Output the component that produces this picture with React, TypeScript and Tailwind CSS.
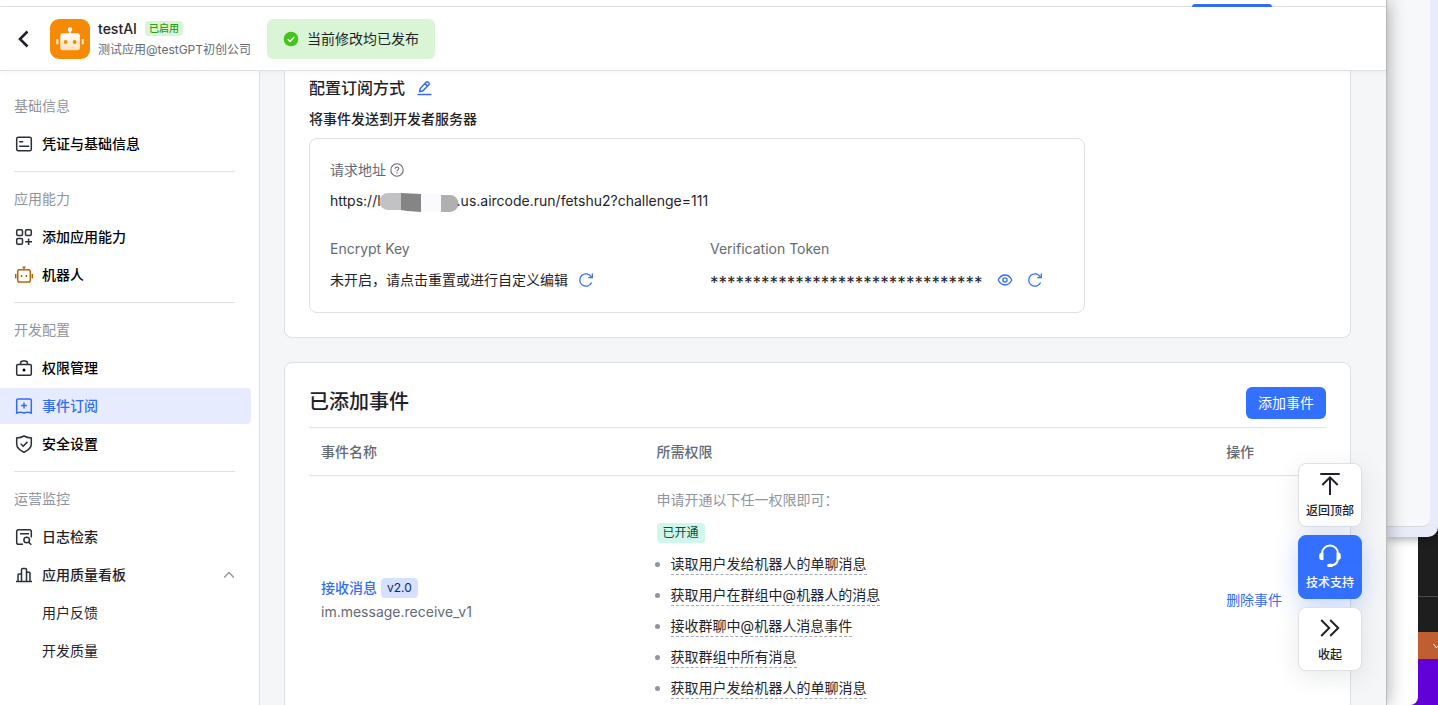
import { type ReactNode } from "react";

type NavItem = {
  label: string;
  icon?: ReactNode;
  active?: boolean;
  soft?: boolean;
  open?: boolean;
};

const NAV: { title: string; items: NavItem[] }[] = [
  {
    title: "基础信息",
    items: [{ label: "凭证与基础信息", icon: <CredentialIcon /> }],
  },
  {
    title: "应用能力",
    items: [
      { label: "添加应用能力", icon: <AddAppIcon /> },
      { label: "机器人", icon: <RobotIcon /> },
    ],
  },
  {
    title: "开发配置",
    items: [
      { label: "权限管理", icon: <LockIcon /> },
      { label: "事件订阅", icon: <EventIcon />, active: true },
      { label: "安全设置", icon: <ShieldIcon /> },
    ],
  },
  {
    title: "运营监控",
    items: [
      { label: "日志检索", icon: <LogIcon />, soft: true },
      { label: "应用质量看板", icon: <ChartIcon />, soft: true, open: true },
      { label: "用户反馈" },
      { label: "开发质量" },
    ],
  },
];

const PERMISSIONS = [
  "读取用户发给机器人的单聊消息",
  "获取用户在群组中@机器人的消息",
  "接收群聊中@机器人消息事件",
  "获取群组中所有消息",
  "获取用户发给机器人的单聊消息",
];

export default function App() {
  return (
    <div className="flex h-screen overflow-hidden bg-[#1e1e1e] font-['Inter','Noto_Sans_CJK_SC',sans-serif] text-sm text-[#1f2329]">
      <div className="relative z-10 flex min-w-0 flex-1 flex-col border-r border-[#b9bbbd] bg-white shadow-[0_0_18px_rgba(0,0,0,0.35)]">
        {/* Bottom edge of the site tabs */}
        <div className="flex h-[7px] shrink-0 items-end justify-end border-b border-[#dee0e3] pr-[114px]">
          <span className="-mb-px h-[3px] w-20 rounded-t-sm bg-[#336df4]" />
        </div>
        <Header />
        <div className="flex min-h-0 flex-1">
          <Sidebar />
          <main className="min-w-0 flex-1 overflow-hidden bg-[#f5f6f7] pr-[35px] pl-6">
            <SubscriptionCard />
            <EventsCard />
          </main>
        </div>
        <FloatingActions />
      </div>
      <Backdrop />
    </div>
  );
}

function Header() {
  return (
    <header className="relative z-10 flex h-16 shrink-0 items-center border-b border-[#dee0e3] bg-white pl-3.5 shadow-[0_2px_6px_rgba(31,35,41,0.04)]">
      <button aria-label="返回" className="mr-4 flex h-5 w-5 items-center justify-center">
        <svg width="20" height="20" viewBox="0 0 20 20" fill="none" stroke="#1f2329" strokeWidth="2.6">
          <path d="M13.5 2.5 6 10l7.5 7.5" />
        </svg>
      </button>
      <AvatarIcon />
      <div className="ml-2 pt-px">
        <div className="flex items-center gap-2">
          <h1 className="leading-5 font-medium">testAI</h1>
          <span className="rounded bg-[#d9f5d6] px-1 text-[10px] leading-[15px] font-medium text-[#2ea121]">
            已启用
          </span>
        </div>
        <p className="mt-px text-xs leading-5 text-[#646a73]">测试应用@testGPT初创公司</p>
      </div>
      <div className="ml-4 flex h-10 items-center gap-2 rounded-md bg-[#d9f5d6] px-4">
        <svg width="16" height="16" viewBox="0 0 16 16" fill="none">
          <circle cx="8" cy="8" r="7.3" fill="#43c51b" />
          <path d="m4.8 8.2 2.3 2.2 4.1-4.3" stroke="#fff" strokeWidth="1.5" />
        </svg>
        <span>当前修改均已发布</span>
      </div>
    </header>
  );
}

function Sidebar() {
  return (
    <nav className="w-[260px] shrink-0 overflow-hidden border-r border-[#dee0e3] bg-white pt-[21px]">
      {NAV.map((section, i) => (
        <section key={section.title}>
          {i > 0 && <hr className="mt-[9px] mr-6 mb-[13px] ml-3.5 border-[#dee0e3]" />}
          <h2 className="mb-1.5 ml-3.5 flex h-7 items-center text-[#8f959e]">{section.title}</h2>
          <ul className="mr-2 flex flex-col gap-0.5">
            {section.items.map((item) => (
              <li key={item.label}>
                <SidebarLink item={item} />
              </li>
            ))}
          </ul>
        </section>
      ))}
    </nav>
  );
}

function SidebarLink({ item }: { item: NavItem }) {
  const tone = item.active
    ? "bg-[#e6ebfe] font-medium text-[#336df4]"
    : !item.icon
      ? "text-[#1f2329]"
      : item.soft
        ? "font-medium text-[#1f2329]"
        : "font-medium text-black";

  return (
    <a href="#" className={`flex h-9 items-center gap-2 rounded-r pr-4 pl-3.5 ${tone}`}>
      <span className="h-5 w-5 shrink-0">{item.icon}</span>
      <span className="flex-1">{item.label}</span>
      {item.open && (
        <svg width="12" height="12" viewBox="0 0 12 12" fill="none" stroke="#8f959e" strokeWidth="1.3">
          <path d="m1.2 8.5 4.8-5 4.8 5" />
        </svg>
      )}
    </a>
  );
}

function SubscriptionCard() {
  return (
    <section className="rounded-b-lg border border-t-0 border-[#dee0e3] bg-white px-6 pt-[5px] pb-6">
      <div className="flex items-center gap-3">
        <h2 className="text-base font-medium">配置订阅方式</h2>
        <button aria-label="编辑">
          <svg width="16" height="16" viewBox="0 0 16 16" fill="none" stroke="#336df4" strokeWidth="1.5">
            <path d="M2.7 11.6 3.2 8.5 9.3 2.1c.5-.5 1.2-.5 1.7 0l.9.9c.5.5.5 1.2 0 1.7L5.7 11l-3 .6ZM7.9 3.5l2.6 2.6" />
            <path d="M.5 14.5h14" />
          </svg>
        </button>
      </div>
      <h3 className="mt-2 leading-[22px] font-medium">将事件发送到开发者服务器</h3>
      <div className="mt-2 max-w-[776px] rounded-lg border border-[#dee0e3] p-5">
        <div className="flex items-center gap-1 leading-[22px] text-[#646a73]">
          请求地址
          <svg width="14" height="14" viewBox="0 0 14 14" fill="none" stroke="currentColor" strokeWidth="1.1">
            <circle cx="7" cy="7" r="6.2" />
            <path d="M5.2 5.7c0-1 .8-1.7 1.8-1.7s1.8.7 1.8 1.6c0 1.2-1.8 1.3-1.8 2.6" />
            <path d="M7 9.2v1.2" />
          </svg>
        </div>
        <p className="mt-2 flex items-center leading-6">
          https://l
          <svg className="-mx-0.5" width="80" height="22" viewBox="0 0 80 22">
            <path d="M9 3h13v17H9A8.5 8.5 0 0 1 9 3Z" fill="#c2c2c4" />
            <path d="M22 3l20 1v18l-14-1-6-1Z" fill="#858585" />
            <path d="M42 4h20v18H42Z" fill="#fafafc" />
            <path d="M62 5h9a8.5 8.5 0 0 1 0 17h-9Z" fill="#b0b0b0" />
          </svg>
          .us.aircode.run/fetshu2?challenge=111
        </p>
        <div className="mt-[25px] grid grid-cols-[380px_1fr] gap-y-2">
          <span className="leading-[22px] text-[#646a73]">Encrypt Key</span>
          <span className="leading-[22px] text-[#646a73]">Verification Token</span>
          <div className="flex items-center gap-2.5 leading-6">
            未开启，请点击重置或进行自定义编辑
            <RefreshButton />
          </div>
          <div className="flex h-6 items-center gap-3.5">
            <span className="pt-1.5 text-[17px] leading-6">********************************</span>
            <button aria-label="查看">
              <svg width="16" height="16" viewBox="0 0 16 16" fill="none" stroke="#336df4" strokeWidth="1.3">
                <path d="M1.2 8C2.7 5 5 3 8 3s5.3 2 6.8 5c-1.5 3-3.8 5-6.8 5S2.7 11 1.2 8Z" />
                <circle cx="8" cy="8" r="2.1" />
              </svg>
            </button>
            <RefreshButton />
          </div>
        </div>
      </div>
    </section>
  );
}

function RefreshButton() {
  return (
    <button aria-label="重置">
      <svg width="16" height="16" viewBox="0 0 16 16" fill="none" stroke="#336df4" strokeWidth="1.3">
        <path d="M13.6 10.6A6.2 6.2 0 1 1 13.4 5" />
        <path d="M14.3 1.6v4h-4" />
      </svg>
    </button>
  );
}

function EventsCard() {
  return (
    <section className="mt-6 rounded-t-lg border border-[#dee0e3] bg-white px-6 pt-6">
      <div className="flex items-start justify-between pb-2">
        <h2 className="text-xl leading-[30px] font-medium">已添加事件</h2>
        <button className="h-8 rounded-md bg-[#3370ff] px-3 text-white">添加事件</button>
      </div>
      <table className="w-full table-fixed border-t border-[#dee0e3] text-left">
        <thead>
          <tr className="h-12 border-b border-[#dee0e3] text-[#646a73]">
            <th className="w-[33%] px-3 font-medium">事件名称</th>
            <th className="w-[56%] px-3 font-medium">所需权限</th>
            <th className="w-[11%] px-3 font-medium">操作</th>
          </tr>
        </thead>
        <tbody>
          <tr>
            <td className="px-3 align-middle">
              <div className="flex items-center gap-1">
                <a href="#" className="font-medium text-[#336df4]">
                  接收消息
                </a>
                <span className="rounded bg-[#d6e0ff] px-1.5 text-xs leading-5 text-[#0c296e]">v2.0</span>
              </div>
              <p className="mt-1 text-[#646a73]">im.message.receive_v1</p>
            </td>
            <td className="px-3 pt-[13px] pb-5">
              <p className="leading-[22px] text-[#8f959e]">申请开通以下任一权限即可：</p>
              <span className="mt-3 inline-block rounded bg-[#cff7ec] px-1.5 text-xs leading-5 text-[#044f41]">
                已开通
              </span>
              <ul className="mt-1.5">
                {PERMISSIONS.map((p, i) => (
                  <li key={i} className="flex h-[31px] items-center gap-[11px]">
                    <span className="-ml-0.5 h-[5px] w-[5px] rounded-full bg-[#8f959e]" />
                    <span className="border-b border-dashed border-[#a6abb2] leading-5">{p}</span>
                  </li>
                ))}
              </ul>
            </td>
            <td className="px-3 align-middle">
              <button className="text-[#336df4]">删除事件</button>
            </td>
          </tr>
        </tbody>
      </table>
    </section>
  );
}

function FloatingActions() {
  const light =
    "border-[#dee0e3] bg-white font-medium text-[#1f2329] shadow-[0_6px_24px_rgba(31,35,41,0.10)]";
  const blue =
    "border-[#3370ff] bg-[#3370ff] font-medium text-white shadow-[0_6px_24px_rgba(51,112,255,0.30)]";

  return (
    <div className="absolute right-6 bottom-[34px] z-20 flex flex-col gap-2">
      <FloatButton label="返回顶部" style={light}>
        <path d="M2.3 2h19.4M12 23V5.5M4.3 13 12 5.3l7.7 7.7" />
      </FloatButton>
      <FloatButton label="技术支持" style={blue}>
        <path d="M4 9.5a8 8 0 0 1 16 0M20 14c0 4-2 6.7-6 7.3" />
        <path
          d="M5.5 8.5V16H4a2.8 2.8 0 0 1-2.8-2.8v-2A2.8 2.8 0 0 1 4 8.5ZM18.5 8.5V16H20a2.8 2.8 0 0 0 2.8-2.8v-2A2.8 2.8 0 0 0 20 8.5Z"
          fill="currentColor"
          stroke="none"
        />
        <rect x="9.2" y="19.8" width="6" height="3.2" rx="1.6" fill="currentColor" stroke="none" />
      </FloatButton>
      <FloatButton label="收起" style={light}>
        <path d="m3.2 4 8 8-8 8M12.2 4l8 8-8 8" />
      </FloatButton>
    </div>
  );
}

function FloatButton({
  label,
  style,
  children,
}: {
  label: string;
  style: string;
  children: ReactNode;
}) {
  return (
    <button className={`flex h-16 w-16 flex-col items-center gap-[7px] rounded-lg border pt-2 text-xs ${style}`}>
      <svg width="24" height="24" viewBox="0 0 24 24" fill="none" stroke="currentColor" strokeWidth="2" className="shrink-0">
        {children}
      </svg>
      {label}
    </button>
  );
}

/* Other windows and desktop showing at the right of the browser */
function Backdrop() {
  return (
    <div className="flex w-[51px] shrink-0 flex-col">
      <div className="z-[1] flex-1 rounded-br-[10px] bg-[#e8ecf8] pr-2 pb-2.5 shadow-[0_2px_10px_rgba(0,0,0,0.35)]">
        <div className="h-full rounded-br-lg border-b border-[#d3d8e0] bg-[#f7f8fa]" />
      </div>
      <div className="-mt-2.5 flex h-[178px] bg-[#6200d8]">
        <div className="w-[31px] shrink-0 rounded-br-lg bg-white" />
        <div className="flex flex-1 flex-col">
          <div className="h-[105px] bg-[#1e1e1e] pt-[69px]">
            <div className="border-b border-[#4a4a4a]" />
          </div>
          <div className="flex h-[27px] items-center justify-end bg-[#bf5f31]">
            <svg width="5" height="8" viewBox="0 0 5 8" fill="none" stroke="#fff">
              <path d="m.5 2 3 4L5 4" />
            </svg>
          </div>
        </div>
      </div>
    </div>
  );
}

function AvatarIcon() {
  return (
    <svg width="40" height="40" viewBox="0 0 40 40" className="shrink-0">
      <defs>
        <linearGradient id="head" x1="0" y1="0" x2="0" y2="1">
          <stop offset="0" stopColor="#fff" />
          <stop offset="1" stopColor="#ffe0b8" />
        </linearGradient>
      </defs>
      <rect width="40" height="40" rx="9" fill="#f78a05" />
      <circle cx="20" cy="10.5" r="2.2" fill="#fff" />
      <path d="M19.3 12h1.4v3h-1.4Z" fill="#fff" />
      <rect x="10.3" y="14.3" width="19.6" height="17" rx="2.5" fill="url(#head)" />
      <rect x="6.2" y="20" width="2.2" height="5.6" rx="1.1" fill="#ffe8cc" />
      <rect x="31.7" y="20" width="2.2" height="5.6" rx="1.1" fill="#ffe8cc" />
      <circle cx="15.7" cy="23" r="1.9" fill="#f78a05" />
      <circle cx="24.6" cy="23" r="1.9" fill="#f78a05" />
    </svg>
  );
}

function NavIcon({ color = "#2b2f36", children }: { color?: string; children: ReactNode }) {
  return (
    <svg width="20" height="20" viewBox="0 0 20 20" fill="none" stroke={color} strokeWidth="1.5">
      {children}
    </svg>
  );
}

function CredentialIcon() {
  return (
    <NavIcon>
      <rect x="2.7" y="3.2" width="14.6" height="13.6" rx="1.5" />
      <path d="M5.2 7.7h4M5.2 12.3h10" />
    </NavIcon>
  );
}

function AddAppIcon() {
  return (
    <NavIcon>
      <rect x="2.7" y="2.7" width="5.8" height="5.8" rx="1.2" />
      <rect x="11.5" y="2.7" width="5.8" height="5.8" rx="1.2" />
      <rect x="2.7" y="11.5" width="5.8" height="5.8" rx="1.2" />
      <path d="M14.6 11.5V18M11.2 14.7H18" />
    </NavIcon>
  );
}

function RobotIcon() {
  return (
    <NavIcon color="#b2660b">
      <rect x="3.7" y="4.7" width="12.6" height="12.4" rx="1.8" />
      <path d="M10 1.5v3M8.5 2.3h3M1.7 9v4.5M18.3 9v4.5M7.6 10v2M12.4 10v2" />
    </NavIcon>
  );
}

function LockIcon() {
  return (
    <NavIcon>
      <rect x="2.7" y="6.5" width="14.6" height="10.8" rx="1.3" />
      <path d="M6.5 6.5v-1C6.5 4 7.5 3 9 3h2c1.5 0 2.5 1 2.5 2.5v1" />
      <circle cx="10" cy="12" r="1.5" fill="currentColor" stroke="none" />
    </NavIcon>
  );
}

function EventIcon() {
  return (
    <NavIcon color="#336df4">
      <path d="M4 3h12c.8 0 1.3.5 1.3 1.3V17c-2.6-1.2-4.8-1.2-7.3 0-2.5-1.2-4.7-1.2-7.3 0V4.3C2.7 3.5 3.2 3 4 3Z" />
      <path d="M10 6.5v6M7 9.5h6" />
    </NavIcon>
  );
}

function ShieldIcon() {
  return (
    <NavIcon>
      <path d="M10 2c2.3 1.3 4.7 1.8 7.3 1.9V10c0 3.6-3 6.3-7.3 8.2C5.7 16.3 2.7 13.6 2.7 10V3.9C5.3 3.8 7.7 3.3 10 2Z" />
      <path d="m6.7 9.8 2.5 2.4 4.3-4.3" />
    </NavIcon>
  );
}

function LogIcon() {
  return (
    <NavIcon>
      <path d="M9 17.3H4.5c-1 0-1.8-.8-1.8-1.8v-11c0-1 .8-1.8 1.8-1.8h11c1 0 1.8.8 1.8 1.8v6M6 6.7h9" />
      <circle cx="12.7" cy="13" r="2.8" />
      <path d="m14.8 15.2 2.5 2.5" />
    </NavIcon>
  );
}

function ChartIcon() {
  return (
    <NavIcon>
      <path d="M2 16.6h16M4 16.5V9.8c0-.5.3-.8.8-.8h2.7M7.5 16.5V4.7c0-.7.5-1.2 1.2-1.2h2.6c.7 0 1.2.5 1.2 1.2v11.8M12.5 7.2h2.7c.5 0 .8.3.8.8v8.5" />
    </NavIcon>
  );
}
